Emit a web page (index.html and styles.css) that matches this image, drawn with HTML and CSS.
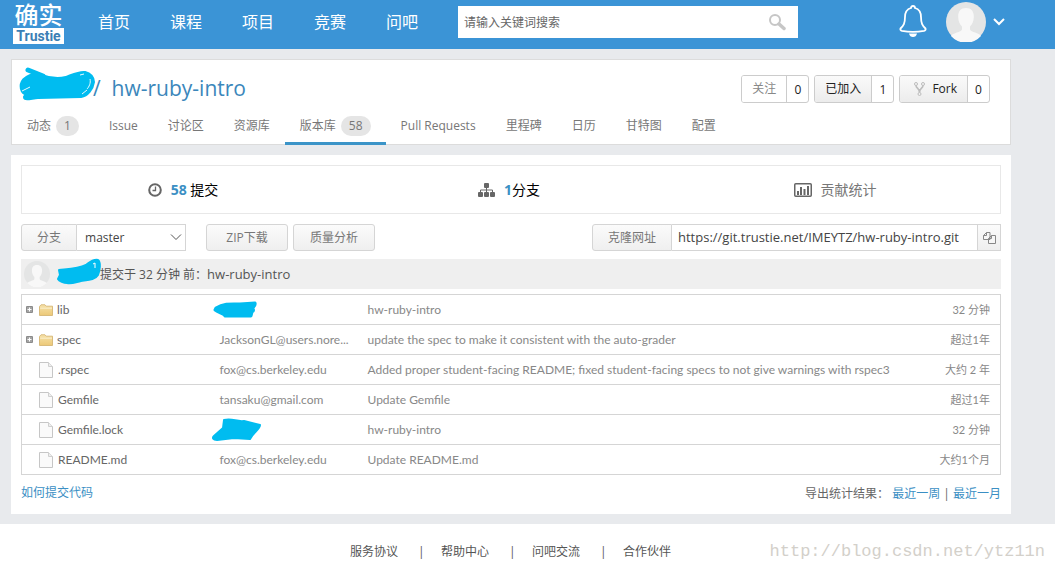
FILE: index.html
```html
<!DOCTYPE html>
<html lang="zh-CN">
<head>
<meta charset="utf-8">
<title>hw-ruby-intro - Trustie</title>
<link rel="stylesheet" href="styles.css">
</head>
<body>
<svg class="defs" width="0" height="0" aria-hidden="true">
  <defs>
    <linearGradient id="fold" x1="0" y1="0" x2="0" y2="1"><stop offset="0" stop-color="#f6e2aa"/><stop offset="1" stop-color="#ecc877"/></linearGradient>
    <symbol id="folder" viewBox="0 0 14 12"><path d="M.5 11.5V2.5L2 .8h4l1.2 1.4h6.3v9.3z" fill="url(#fold)" stroke="#d9bb7c"/><path d="M1.2 4.2h11.8" stroke="#fbf0cd"/></symbol>
    <symbol id="file" viewBox="0 0 14 16"><path d="M.5.5h9l4 4v11H.5z" fill="#fafafa" stroke="#c6c6c6"/><path d="M9.5.5v4h4" fill="#eee" stroke="#cfcfcf"/></symbol>
    <symbol id="plus" viewBox="0 0 7 7"><rect width="7" height="7" rx="1" fill="#8b8b8b"/><rect x="1" y="1" width="5" height="5" fill="#a4a4a4"/><path d="M1.5 3.5h4M3.5 1.5v4" stroke="#fff"/></symbol>
    <symbol id="person" viewBox="0 0 40 40"><circle cx="20" cy="20" r="20" fill="#e4e5e5"/><path d="M20 6c5.500 0 8 3.500 7.800 9-.1 4-1.500 7.500-3.800 9.500v3c1 3 9 3 11 6.500A20 20 0 0 1 5 34c2-3.500 10-3.500 11-6.500v-3c-2.300-2-3.700-5.500-3.800-9.500C12 9.500 14.500 6 20 6z" fill="#f8f8f8"/></symbol>
  </defs>
</svg>

<header class="topbar">
  <a class="logo" href="#"><span class="logo-cn">确实</span><span class="logo-en">Trustie</span></a>
  <nav class="mainnav">
    <a href="#">首页</a><a href="#">课程</a><a href="#">项目</a><a href="#">竞赛</a><a href="#">问吧</a>
  </nav>
  <form class="search">
    <input type="text" aria-label="搜索" placeholder="请输入关键词搜索">
    <button type="button" aria-label="搜索"><svg width="18" height="18" viewBox="0 0 18 18" fill="none" stroke="#c6c6c6"><circle cx="7" cy="7" r="5" stroke-width="2"/><path d="M11 11l5 4.500" stroke-width="3.500" stroke-linecap="round"/></svg></button>
  </form>
  <div class="user">
    <button type="button" aria-label="消息"><svg width="30" height="34" viewBox="0 0 30 34" fill="none" stroke="#fff" stroke-width="1.800"><path d="M15 1c1.500 0 2 1 2 2 4 1.200 6 4.500 6 9 0 6.500 1.500 8.500 4.500 11.500.5 1-.2 2-1.500 2.300-7 1.400-15 1.400-22 0-1.300-.3-2-1.300-1.500-2.300C5.500 20.500 7 18.500 7 12c0-4.500 2-7.800 6-9 0-1 .5-2 2-2z"/><path d="M11 28.500h8c-.5 2.500-2 3.500-4 3.500s-3.500-1-4-3.500z" fill="#fff" stroke="none"/></svg></button>
    <svg class="avatar" width="40" height="40"><use href="#person"/></svg>
    <button type="button" aria-label="用户菜单"><svg width="12" height="8" viewBox="0 0 12 8" fill="none" stroke="#fff" stroke-width="2"><path d="M1 1l5 5 5-5"/></svg></button>
  </div>
</header>

<main class="wrap">
  <section class="panel project">
    <div class="headline">
      <h1><svg width="78" height="36" viewBox="0 0 78 36" aria-hidden="true"><path d="M10 4l15 6" fill="none" stroke="#00bcf0" stroke-width="5" stroke-linecap="round"/><path d="M6 14c6-5 12-6 18-4 8 3 16 4 24 2 8-3 14-6 19-5 5 1 8 5 8 9-1 7-6 13-12 14l-43 1c-5 0-13 3-13 0l3-3c-7-1-8-9-4-14z" fill="#00bcf0" stroke="#00bcf0" stroke-width="4" stroke-linecap="round" stroke-linejoin="round"/><path d="M4 25l8-4M62 9l4-1M64 28l5-4M72 13c1 4-1 8-3 10" fill="none" stroke="#e8faff"/></svg><a href="#">/ &nbsp;hw-ruby-intro</a></h1>
      <div class="actions">
        <div class="pair plain"><button type="button">关注</button><a href="#">0</a></div>
        <div class="pair"><button type="button">已加入</button><a href="#">1</a></div>
        <div class="pair fork"><button type="button"><svg width="11" height="14" viewBox="0 0 11 14" fill="none" stroke="#bdbdbd"><circle cx="2" cy="2" r="1.500"/><circle cx="9" cy="2" r="1.500"/><circle cx="5.500" cy="12" r="1.500"/><path d="M2 3.500c0 3 3.500 2.500 3.500 7M9 3.500c0 3-3.500 2.500-3.500 7" stroke-width="1.600"/></svg>Fork</button><a href="#">0</a></div>
      </div>
    </div>
    <nav class="tabs">
      <a href="#">动态<span>1</span></a><a href="#">Issue</a><a href="#">讨论区</a><a href="#">资源库</a><a href="#" class="active">版本库<span>58</span></a><a href="#">Pull Requests</a><a href="#">里程碑</a><a href="#">日历</a><a href="#">甘特图</a><a href="#">配置</a>
    </nav>
  </section>

  <section class="panel repo">
    <div class="stats">
      <a href="#"><svg width="14" height="14" viewBox="0 0 14 14" fill="none" stroke="#666"><circle cx="7" cy="7" r="5.800" stroke-width="2"/><path d="M7.500 3.500v4H4.500" stroke-width="1.300"/></svg><span><b>58</b> 提交</span></a>
      <a href="#"><svg width="17" height="14" viewBox="0 0 17 14" fill="#666"><rect x="6" width="5" height="5" rx="1"/><rect y="9" width="5" height="5" rx="1"/><rect x="6" y="9" width="5" height="5" rx="1"/><rect x="12" y="9" width="5" height="5" rx="1"/><path d="M8.500 5v4M2.500 9V7h12v2" fill="none" stroke="#666"/></svg><span><b>1</b>分支</span></a>
      <a href="#" class="muted"><svg width="18" height="14" viewBox="0 0 18 14"><rect x=".75" y=".75" width="16.500" height="12.500" rx="1" fill="none" stroke="#666" stroke-width="1.500"/><path d="M4 8v4M7 4v8M10.500 6v6M14 3v9" stroke="#666" stroke-width="2"/></svg><span>贡献统计</span></a>
    </div>

    <div class="tools">
      <div class="branch"><label for="branch">分支</label><div class="selectbox"><select id="branch"><option>master</option></select><svg width="12" height="7" viewBox="0 0 12 7" fill="none" stroke="#555"><path d="M1 .5l5 5 5-5"/></svg></div></div>
      <button type="button" class="btn">ZIP下载</button>
      <button type="button" class="btn">质量分析</button>
      <div class="clone"><label for="url">克隆网址</label><input id="url" type="text" readonly value="https://git.trustie.net/IMEYTZ/hw-ruby-intro.git"><button type="button" aria-label="复制"><svg width="13" height="13" viewBox="0 0 13 13" fill="#f7f7f7" stroke="#888"><path d="M3.500 1.500h3.500v7H.5v-4zM3.500 1.500v3h-3M8.500 4.500h4v8h-7v-5zM8.500 4.500v3h-3"/></svg></button></div>
    </div>

    <div class="commit">
      <svg width="26" height="26"><use href="#person"/></svg>
      <svg class="scrib" width="46" height="28" viewBox="0 0 46 28" aria-hidden="true"><path d="M3 12c11-1 19-1 27-5 4-3 7-6 12-5 3 2 2 10 0 15-3 5-10 5-17 6-5 1-9 3-14 2-3 0-8-2-9-4l2-4z" fill="#00bcf0" stroke="#00bcf0" stroke-width="2" stroke-linejoin="round"/><path d="M37 6l2-1v5" fill="none" stroke="#fff"/></svg>
      <span>提交于 32 分钟 前<span class="colon">：</span><a href="#">hw-ruby-intro</a></span>
    </div>

    <table class="files">
      <tbody>
        <tr><td class="name"><svg class="exp"><use href="#plus"/></svg><svg class="dir"><use href="#folder"/></svg><a href="#">lib</a></td><td class="who"><svg class="mark" width="46" height="18" viewBox="0 0 46 18" aria-hidden="true"><path d="M4 7c8-5 16-4 24-4l15-1c1 3-2 4-3 6 2 0 2 2 0 3l-1 4H13c-1-3-7-3-10-6z" fill="#00bcf0" stroke="#00bcf0" stroke-width="3" stroke-linejoin="round"/></svg></td><td>hw-ruby-intro</td><td class="age">32 分钟</td></tr>
        <tr><td class="name"><svg class="exp"><use href="#plus"/></svg><svg class="dir"><use href="#folder"/></svg><a href="#">spec</a></td><td class="who">JacksonGL@users.nore...</td><td>update the spec to make it consistent with the auto-grader</td><td class="age">超过1年</td></tr>
        <tr><td class="name leaf"><svg class="doc"><use href="#file"/></svg><a href="#">.rspec</a></td><td class="who">fox@cs.berkeley.edu</td><td>Added proper student-facing README; fixed student-facing specs to not give warnings with rspec3</td><td class="age">大约 2 年</td></tr>
        <tr><td class="name leaf"><svg class="doc"><use href="#file"/></svg><a href="#">Gemfile</a></td><td class="who">tansaku@gmail.com</td><td>Update Gemfile</td><td class="age">超过1年</td></tr>
        <tr><td class="name leaf"><svg class="doc"><use href="#file"/></svg><a href="#">Gemfile.lock</a></td><td class="who"><svg class="mark" width="50" height="24" viewBox="0 0 50 24" aria-hidden="true"><path d="M12 2c9-2 12 2 20 1l16 4c0 4-7 8-10 14l-16-1-17 2c-4 0-5-2-3-4l9-8z" fill="#00bcf0" stroke="#00bcf0" stroke-width="2" stroke-linejoin="round"/></svg></td><td>hw-ruby-intro</td><td class="age">32 分钟</td></tr>
        <tr><td class="name leaf"><svg class="doc"><use href="#file"/></svg><a href="#">README.md</a></td><td class="who">fox@cs.berkeley.edu</td><td>Update README.md</td><td class="age">大约1个月</td></tr>
      </tbody>
    </table>

    <div class="links">
      <a href="#">如何提交代码</a>
      <span>导出统计结果<span class="colon">：</span> <a href="#">最近一周</a> | <a href="#">最近一月</a></span>
    </div>
  </section>
</main>

<footer class="foot">
  <nav><a href="#">服务协议</a><i>|</i><a href="#">帮助中心</a><i>|</i><a href="#">问吧交流</a><i>|</i><a href="#">合作伙伴</a></nav>
  <span class="watermark">http://blog.csdn.net/ytz11n</span>
</footer>
</body>
</html>
```
FILE: styles.css
```css
* { box-sizing: border-box; }
body {
  margin: 0;
  background: #e8eaed;
  color: #666;
  font: 12px/18px "Open Sans", "Noto Sans CJK SC", sans-serif;
}
a { color: inherit; text-decoration: none; }
svg { display: block; flex: none; }
button, input, select { font: inherit; color: inherit; margin: 0; padding: 0; }
button { border: 0; background: none; cursor: pointer; }
.defs { position: absolute; }
.colon { font-family: "Noto Sans CJK JP", sans-serif; }

.topbar {
  display: flex;
  align-items: center;
  height: 49px;
  padding: 0 50px 5px 13px;
  background: #3b94d6;
  color: #fff;
}
.logo { width: 51px; display: flex; flex-direction: column; text-align: center; }
.logo-cn { font: 500 24px/28px "Noto Sans CJK SC", sans-serif; }
.logo-en { background: #fff; color: #3b7fb5; font: bold 14px/16px Roboto, sans-serif; }
.mainnav { display: flex; gap: 40px; margin: 0 40px 0 34px; font-size: 16px; line-height: 24px; }
.search { display: flex; flex: 0 1 340px; height: 32px; padding: 0 12px 0 6px; background: #fff; }
.search input { flex: 1; min-width: 0; padding-top: 2px; border: 0; outline: 0; background: none; }
.search input::placeholder { color: #666; opacity: 1; }
.user { display: flex; align-items: center; gap: 7px; margin-left: auto; }
.user .avatar { margin-left: 11px; }

.wrap { max-width: 1022px; padding: 10px 11px; display: grid; gap: 10px; }
.panel { background: #fff; }
.project { border: 1px solid #dcdcdc; height: 86px; display: flex; flex-direction: column; justify-content: space-between; }
.headline { display: flex; justify-content: space-between; align-items: flex-start; padding: 6px 20px 0 6px; }
h1 { display: flex; align-items: flex-start; margin: 0; color: #3b87bb; font-size: 21px; font-weight: normal; line-height: 36px; }
h1 a { margin-left: -3px; padding-top: 4px; }
.actions { display: flex; gap: 5px; padding-top: 9px; }
.pair { display: flex; height: 28px; border: 1px solid #ccc; border-radius: 3px; color: #222; line-height: 28px; overflow: hidden; }
.pair button { padding: 0 10px; display: flex; align-items: center; gap: 7px; background: linear-gradient(#fafafa, #ececec); border-right: 1px solid #ccc; }
.pair a { width: 21px; text-align: center; }
.pair.plain button { background: #fff; color: #888; }
.pair.fork button { padding-left: 14px; }
.tabs { display: flex; margin: -10px 0 -1px; color: #777; }
.tabs a { display: flex; align-items: center; gap: 5px; height: 35px; padding: 0 15px; border-bottom: 3px solid transparent; }
.tabs a.active { border-color: #3b94c8; }
.tabs span { padding: 1px 8px; border-radius: 10px; background: #e5e5e5; }

.repo { padding: 10px 10px 11px; }
.stats { display: grid; grid-template-columns: repeat(3, 1fr); height: 49px; border: 1px solid #e8e8e8; color: #000; font-size: 14px; }
.stats a { display: flex; align-items: center; justify-content: center; gap: 9px; padding-right: 4px; }
.stats b { color: #3b8fc4; }
.stats .muted { color: #777; }
.tools { display: flex; gap: 5px; margin: 10px 0 8px; height: 27px; line-height: 25px; }
.branch, .clone { display: flex; }
.branch { margin-right: 15px; }
.tools label, .btn, .clone button { border: 1px solid #d5d5d5; background: linear-gradient(#fbfbfb, #efefef); color: #777; }
.tools label { padding: 0 15px; border-radius: 3px 0 0 3px; }
.btn { width: 82px; border-radius: 3px; }
.selectbox { display: grid; align-items: center; width: 109px; border: 1px solid #d5d5d5; border-left: 0; }
.selectbox select { grid-area: 1 / 1; width: 100%; height: 25px; padding-left: 8px; border: 0; background: none; appearance: none; color: #444; }
.selectbox svg { grid-area: 1 / 1; justify-self: end; margin-right: 3px; pointer-events: none; }
.clone { flex: 0 1 409px; margin-left: auto; }
.clone input { flex: 1; min-width: 0; padding: 0 6px; border: 1px solid #d5d5d5; border-width: 1px 0; color: #444; font-size: 13px; }
.clone button { width: 24px; display: grid; place-items: center; }

.commit { display: flex; align-items: center; height: 30px; padding: 0 3px; margin-bottom: 5px; background: #efefef; color: #555; }
.commit a { font-size: 13px; }
.scrib { margin: 0 -2px 4px 6px; }

.files { width: 100%; table-layout: fixed; border-collapse: collapse; border: 1px solid #d5d5d5; color: #888; font-family: Lato, "Noto Sans CJK SC", sans-serif; }
.files tr { border-top: 1px solid #d5d5d5; }
.files td { height: 30px; padding: 0; white-space: nowrap; }
.files .name { width: 198px; padding-left: 4px; color: #666; }
.files .name svg, .files .name a { display: inline-block; vertical-align: middle; }
.files .name.leaf { padding-left: 17px; }
.files .who { width: 148px; }
.files .age { width: 90px; padding-right: 10px; text-align: right; font-size: 11px; }
.exp { width: 7px; height: 7px; margin-right: 6px; }
.dir { width: 14px; height: 12px; margin-right: 4px; }
.doc { width: 14px; height: 16px; margin-right: 5px; }
.files .mark { margin-left: -8px; }

.links { display: flex; justify-content: space-between; padding-top: 9px; }
.links a { color: #3b8fc4; }

.foot { display: grid; align-items: center; min-height: 56px; padding-right: 10px; background: #fff; color: #555; }
.foot nav { grid-area: 1 / 1; display: flex; justify-content: center; gap: 20px; margin-left: -24px; }
.foot i { font-style: normal; width: 3px; }
.watermark { grid-area: 1 / 1; justify-self: end; color: #d3d0ca; font: 17px/24px "Liberation Mono", monospace; }
```
